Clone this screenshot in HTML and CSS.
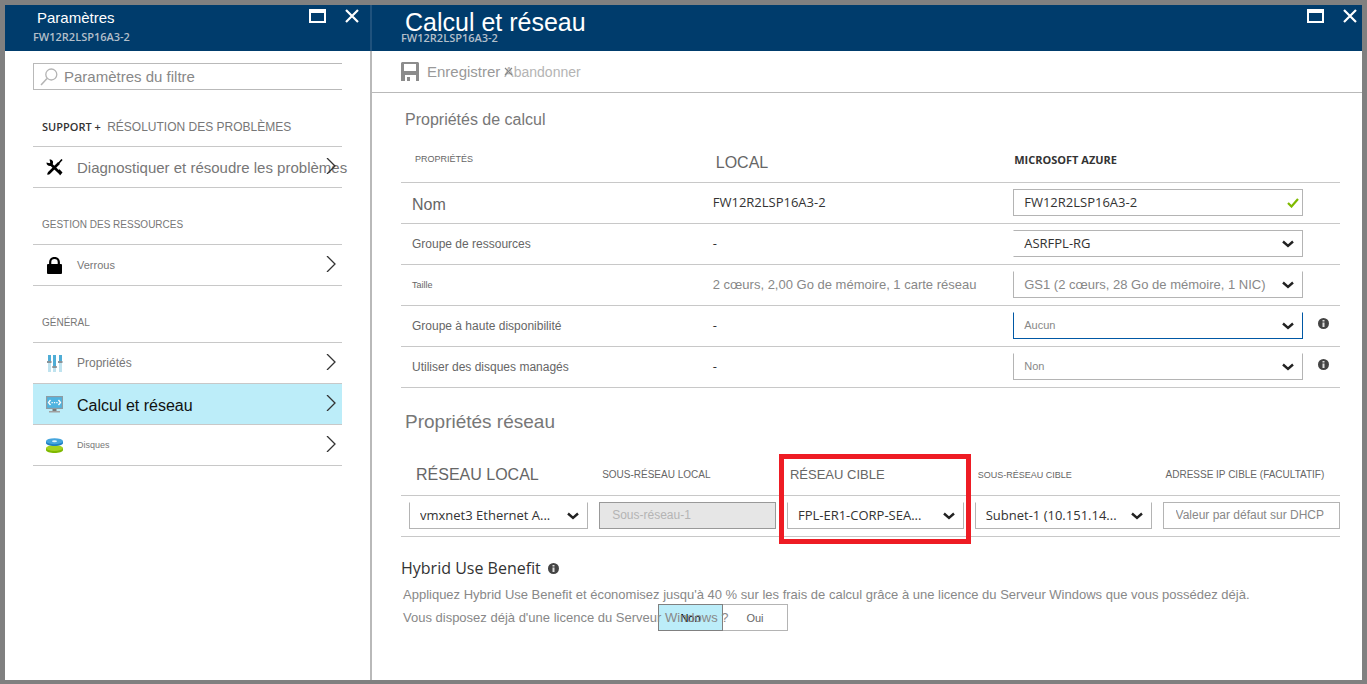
FILE: index.html
```html
<!DOCTYPE html>
<html lang="fr">
<head>
<meta charset="utf-8">
<title>Calcul et réseau</title>
<link rel="stylesheet" href="styles.css">
</head>
<body>
<svg class="sprite" aria-hidden="true">
  <symbol id="maximize" viewBox="0 0 17 14"><path fill="currentColor" fill-rule="evenodd" d="M0 0h17v14H0zM2 4v8h13V4z"/></symbol>
  <symbol id="close" viewBox="0 0 14 14"><path d="M1 1l12 12M13 1L1 13" fill="none" stroke="currentColor" stroke-width="2.2"/></symbol>
  <symbol id="chevron" viewBox="0 0 10 16"><path d="M1 0l8 8-8 8" fill="none" stroke="currentColor" stroke-width="1.3"/></symbol>
  <symbol id="down" viewBox="0 0 12 8"><path d="M1 1.5l5 4.500 5-4.500" fill="none" stroke="currentColor" stroke-width="2.4"/></symbol>
  <symbol id="info" viewBox="0 0 11 11"><circle cx="5.5" cy="5.5" r="5.5" fill="#444"/><path d="M4.500 2h2v1.500h-2zM4.500 4.500h2V9h-2z" fill="#ddd"/></symbol>
</svg>
<div class="portal">
  <nav class="blade menu">
    <header class="bar">
      <div class="titles">
        <h1 class="title">Paramètres</h1>
        <p class="machine">FW12R2LSP16A3-2</p>
      </div>
      <button class="bar-button" aria-label="Agrandir"><svg width="17" height="14"><use href="#maximize"/></svg></button>
      <button class="bar-button" aria-label="Fermer"><svg width="14" height="14"><use href="#close"/></svg></button>
    </header>
    <div class="menu-body">
      <label class="search">
        <svg width="18" height="18" viewBox="0 0 18 18" fill="none" stroke="#b4b4b4"><circle cx="11.3" cy="6.5" r="5.5" stroke-width="1.3"/><path d="M7 10.5L1 17" stroke-width="1.5"/></svg>
        <input class="search-input size-15" type="text" placeholder="Paramètres du filtre">
      </label>
      <h2 class="group size-12"><strong class="group-strong">SUPPORT +</strong> RÉSOLUTION DES PROBLÈMES</h2>
      <a class="item size-15" href="#">
        <svg class="item-icon" viewBox="0 0 17 17"><path d="M2.5 14.5L13 4M4 4.500l10.500 10" stroke="#000" stroke-width="2.6" fill="none"/><path d="M12 5l4-4.500M1.500 15.500l3-3" stroke="#000" stroke-width="1.600" fill="none"/><path d="M.5 3.500l3 .8.8-.8L3.500.5C6.500.2 8 3 6.500 5.500L5 7C2.500 7.500.3 6 .5 3.500zM12 11.500l1.500-1.300 3 3.300-2.500 3z" fill="#000"/></svg>
        <span class="item-text">Diagnostiquer et résoudre les problèmes</span>
        <svg class="item-arrow"><use href="#chevron"/></svg>
      </a>
      <h2 class="group size-10">GESTION DES RESSOURCES</h2>
      <a class="item size-11" href="#">
        <svg class="item-icon" viewBox="0 0 17 17"><rect x="1" y="7" width="15" height="10" rx="1" fill="#000"/><path d="M4.200 8V5a4.300 4 0 0 1 8.600 0v3" fill="none" stroke="#000" stroke-width="2.200"/></svg>
        <span class="item-text">Verrous</span>
        <svg class="item-arrow"><use href="#chevron"/></svg>
      </a>
      <h2 class="group size-10">GÉNÉRAL</h2>
      <a class="item size-12" href="#">
        <svg class="item-icon" viewBox="0 0 17 17"><path d="M2 8h3v9H2zM7 13h3v4H7zM13 8h3v9h-3z" fill="#bfe3ef"/><path d="M2 0h3v6H2zM7 0h3v11H7zM13 0h3v6h-3z" fill="#4fadd6"/><path d="M1 6h4.500v2H1zM6.300 11h4.500v2H6.300zM12 6h4.500v2H12z" fill="#8a9499"/></svg>
        <span class="item-text">Propriétés</span>
        <svg class="item-arrow"><use href="#chevron"/></svg>
      </a>
      <a class="item item-current size-16" href="#" aria-current="page">
        <svg class="item-icon" viewBox="0 0 17 17"><path d="M0 0h17v13H0z" fill="#8f9ca3"/><path d="M1.200 1.200h14.600v10.600H1.200z" fill="#4fb4e0"/><path d="M6.500 13h4v2.500h-4z" fill="#7a7a7a"/><path d="M3 15h11v1.500H3z" fill="#a0a0a0"/><path d="M4.500 4L2.500 6.500l2 2.500M12.500 4l2 2.500-2 2.500" fill="none" stroke="#fff" stroke-width="1.300"/><path d="M5.500 6h1.300v1.200H5.500zM7.900 6h1.300v1.200H7.900zM10.300 6h1.300v1.200h-1.300z" fill="#fff"/></svg>
        <span class="item-text">Calcul et réseau</span>
        <svg class="item-arrow"><use href="#chevron"/></svg>
      </a>
      <a class="item size-9" href="#">
        <svg class="item-icon" viewBox="0 0 17 17"><path d="M0 11v2c0 4 17 4 17 0v-2z" fill="#7fb900"/><ellipse cx="8.500" cy="11" rx="8.500" ry="3" fill="#a5d11f"/><path d="M0 4v2c0 4 17 4 17 0V4z" fill="#1f7fc4"/><ellipse cx="8.500" cy="4.200" rx="8.500" ry="3" fill="#45a5dd"/><ellipse cx="8.500" cy="4.200" rx="2.500" ry="1" fill="#d8f0fa"/></svg>
        <span class="item-text">Disques</span>
        <svg class="item-arrow"><use href="#chevron"/></svg>
      </a>
    </div>
  </nav>
  <main class="blade detail">
    <header class="bar">
      <div class="titles">
        <h1 class="title title-large">Calcul et réseau</h1>
        <p class="machine">FW12R2LSP16A3-2</p>
      </div>
      <button class="bar-button" aria-label="Agrandir"><svg width="17" height="14"><use href="#maximize"/></svg></button>
      <button class="bar-button" aria-label="Fermer"><svg width="14" height="14"><use href="#close"/></svg></button>
    </header>
    <div class="toolbar">
      <button class="tool size-15">
        <svg width="18" height="19" viewBox="0 0 18 19"><path d="M1 0h16l1 1v18h-3v-6H4v6H0V1zM3 2v7h12V2zM6 15h3v4H6z" fill="#8c8c8c" fill-rule="evenodd"/></svg>
        Enregistrer
      </button>
      <button class="tool tool-discard size-14">
        <svg class="discard-icon" viewBox="0 0 9 9"><path d="M1 1l7 7M8 1L1 8" stroke="#888" stroke-width="1.200"/></svg>
        Abandonner
      </button>
    </div>
    <div class="detail-body">
      <h2 class="section size-16">Propriétés de calcul</h2>
      <table class="grid compute">
        <colgroup><col class="compute-name"><col class="compute-local"><col></colgroup>
        <thead>
          <tr><th class="size-9 indent">PROPRIÉTÉS</th><th class="size-16">LOCAL</th><th class="azure">MICROSOFT AZURE</th></tr>
        </thead>
        <tbody>
          <tr>
            <th class="size-16"><label for="name">Nom</label></th><td class="ui">FW12R2LSP16A3-2</td>
            <td><div class="field"><div class="control"><input id="name" class="box ui" type="text" value="FW12R2LSP16A3-2"><svg class="tick" viewBox="0 0 12 10"><path d="M1 5l3.500 3.500L11 1" fill="none" stroke="#7fba00" stroke-width="2.200"/></svg></div></div></td>
          </tr>
          <tr>
            <th class="size-12"><label for="group">Groupe de ressources</label></th><td class="ui">-</td>
            <td><div class="field"><div class="control"><select id="group" class="box ui open-left"><option>ASRFPL-RG</option></select><svg class="arrow"><use href="#down"/></svg></div></div></td>
          </tr>
          <tr>
            <th class="size-9"><label for="size">Taille</label></th><td class="size-13 muted">2 cœurs, 2,00 Go de mémoire, 1 carte réseau</td>
            <td><div class="field"><div class="control"><select id="size" class="box open-top size-13"><option>GS1 (2 cœurs, 28 Go de mémoire, 1 NIC)</option></select><svg class="arrow"><use href="#down"/></svg></div></div></td>
          </tr>
          <tr>
            <th class="size-12"><label for="availability">Groupe à haute disponibilité</label></th><td class="ui">-</td>
            <td><div class="field"><div class="control"><select id="availability" class="box box-focus open-top size-11"><option>Aucun</option></select><svg class="arrow"><use href="#down"/></svg></div><svg class="info field-info"><use href="#info"/></svg></div></td>
          </tr>
          <tr>
            <th class="size-12"><label for="managed">Utiliser des disques managés</label></th><td class="ui">-</td>
            <td><div class="field"><div class="control"><select id="managed" class="box open-top size-11"><option>Non</option></select><svg class="arrow"><use href="#down"/></svg></div><svg class="info field-info"><use href="#info"/></svg></div></td>
          </tr>
        </tbody>
      </table>

      <h2 class="section section-network size-19">Propriétés réseau</h2>
      <table class="grid network">
        <colgroup><col class="network-first"><col class="network-next"><col class="network-next"><col class="network-next"><col></colgroup>
        <thead>
          <tr>
            <th class="size-16" id="local-net">RÉSEAU LOCAL</th>
            <th class="size-10" id="local-sub">SOUS-RÉSEAU LOCAL</th>
            <th class="size-13 marked" id="target-net">RÉSEAU CIBLE<span class="marker"></span></th>
            <th class="size-9" id="target-sub">SOUS-RÉSEAU CIBLE</th>
            <th class="size-10" id="target-ip">ADRESSE IP CIBLE (FACULTATIF)</th>
          </tr>
        </thead>
        <tbody>
          <tr>
            <td><div class="control"><select class="box ui open-top" aria-labelledby="local-net"><option>vmxnet3 Ethernet A...</option></select><svg class="arrow"><use href="#down"/></svg></div></td>
            <td><input class="box box-disabled size-12" type="text" value="Sous-réseau-1" disabled aria-labelledby="local-sub"></td>
            <td><div class="control"><select class="box ui open-top" aria-labelledby="target-net"><option>FPL-ER1-CORP-SEA...</option></select><svg class="arrow"><use href="#down"/></svg></div></td>
            <td><div class="control"><select class="box ui open-top" aria-labelledby="target-sub"><option>Subnet-1 (10.151.14...</option></select><svg class="arrow"><use href="#down"/></svg></div></td>
            <td><input class="box size-12" type="text" placeholder="Valeur par défaut sur DHCP" aria-labelledby="target-ip"></td>
          </tr>
        </tbody>
      </table>

      <h2 class="benefit">Hybrid Use Benefit <svg class="info"><use href="#info"/></svg></h2>
      <p class="note size-13">Appliquez Hybrid Use Benefit et économisez jusqu'à 40 % sur les frais de calcul grâce à une licence du Serveur Windows que vous possédez déjà.</p>
      <div class="question">
        <p class="note question-text size-13">Vous disposez déjà d'une licence du Serveur Windows ?</p>
        <div class="toggle">
          <button class="choice choice-on size-11" aria-pressed="true">Non</button>
          <button class="choice size-11" aria-pressed="false">Oui</button>
        </div>
      </div>
    </div>
  </main>
</div>
</body>
</html>
```
FILE: styles.css
```css
* { box-sizing: border-box; }
body {
  margin: 0;
  background: #808080;
  color: #666;
  font-family: "Liberation Sans", Arial, sans-serif;
}
h1, h2, p { margin: 0; font-weight: 400; }
button, input, select { font-family: inherit; color: inherit; }
button { border: 0; background: none; padding: 0; }
svg { display: block; flex: none; }
.sprite { position: absolute; width: 0; height: 0; }

.size-9 { font-size: 9px; }
.size-10 { font-size: 10px; }
.size-11 { font-size: 11px; }
.size-12 { font-size: 12px; }
.size-13 { font-size: 13px; }
.size-14 { font-size: 14px; }
.size-15 { font-size: 15px; }
.size-16 { font-size: 16px; }
.size-19 { font-size: 19px; }
.ui { font-family: "Open Sans", sans-serif; font-size: 13px; color: #333; }

.portal {
  display: flex;
  min-height: 100vh;
  border: 5px solid #808080;
  border-bottom-width: 4px;
}
.blade { min-width: 0; background: #fff; }
.menu { flex: 0 0 367px; border-right: 2px solid #b9b9b9; }
.detail { flex: 1; }

.bar {
  display: flex;
  align-items: flex-start;
  height: 46px;
  padding: 4px 5px 0 29px;
  background: #003c6c;
  color: #fff;
}
.menu .bar {
  padding-left: 28px;
  padding-right: 11px;
  margin-right: -2px;
  border-right: 2px solid #1f527d;
}
.titles { flex: 1; }
.title { padding-left: 4px; font-size: 15px; line-height: 18px; }
.title-large { padding-top: 8px; font-size: 25px; line-height: 11px; }
.machine {
  font: 600 11px/20px "Open Sans", sans-serif;
  color: #b3bfca;
}
.bar-button { color: #fff; margin-left: 19px; }

.menu-body { padding: 12px 28px 0; }
.search {
  display: flex;
  align-items: center;
  height: 27px;
  padding-left: 6px;
  gap: 6px;
  border: 1px solid #b9b9b9;
  border-right: 0;
}
.search-input { flex: 1; min-width: 0; border: 0; padding: 0; background: none; outline: 0; }
.search-input::placeholder { color: #888; }
.group {
  padding: 27px 9px 9px;
  line-height: 20px;
  border-bottom: 1px solid #c8c8c8;
  color: #777;
}
.group-strong { margin-right: 3px; font: 600 11px/20px "Open Sans", sans-serif; color: #333; }
.item {
  position: relative;
  display: flex;
  align-items: center;
  gap: 14px;
  height: 41px;
  padding-left: 13px;
  border-bottom: 1px solid #c8c8c8;
  color: #777;
  text-decoration: none;
  white-space: nowrap;
}
.item-icon { width: 17px; height: 17px; }
.item-arrow {
  position: absolute;
  right: 6px;
  top: 11px;
  width: 10px;
  height: 16px;
  color: #333;
}
.item-current { background: #bcedf9; color: #111; }
.item-current .item-text { padding-top: 4px; }

.toolbar {
  display: flex;
  align-items: center;
  gap: 4px;
  height: 42px;
  padding-left: 29px;
  border-bottom: 1px solid #b9b9b9;
}
.tool { position: relative; display: flex; align-items: center; gap: 8px; color: #999; }
.tool-discard { color: #b4b4b4; }
.discard-icon { position: absolute; left: 0; top: 3px; width: 9px; height: 9px; }

.detail-body { padding: 15px 22px 0 29px; }
.section { padding-left: 4px; line-height: 24px; color: #777; }
.section-network { margin-top: 22px; }
.grid {
  width: 100%;
  table-layout: fixed;
  border-collapse: separate;
  border-spacing: 0;
}
.grid th { font-weight: 400; text-align: left; }
.grid th, .grid td { padding: 0; border-bottom: 1px solid #c8c8c8; }
.grid tbody tr { height: 41px; }
.grid tbody td { padding-bottom: 2px; }
.compute thead th { height: 51px; padding: 12px 0 0 3px; }
.compute thead th.indent { padding: 4px 0 0 14px; }
.compute thead .azure { padding: 4px 0 0 1px; font: 700 11px "Open Sans", sans-serif; color: #333; }
.compute tbody th { padding-left: 11px; }
.compute tbody th.size-16 { padding-top: 4px; }
.compute-name { width: 33.2%; }
.compute-local { width: 32%; }
.muted { color: #888; }
.field { display: flex; align-items: center; gap: 15px; padding-right: 12px; }
.field .control { flex: 0 0 290px; }
.field-info { align-self: flex-start; margin-top: 6px; }
.control { position: relative; }
.box {
  display: block;
  width: 100%;
  height: 27px;
  margin: 0;
  padding: 0 10px;
  border: 1px solid #b4b4b4;
  border-radius: 0;
  background: #fff;
  appearance: none;
  outline: 0;
  color: #888;
}
.box.ui { color: #333; }
.box::placeholder { color: #888; }
input.box.size-12 { padding: 0 12px; }
.box-focus { border-color: #0058a5; }
.open-left { border-left-color: transparent; }
.open-top { border-top-color: transparent; }
.box-disabled { background: #e6e6e6; border-color: #999; color: #b4b4b4; }
.arrow { position: absolute; right: 9px; top: 10px; width: 12px; height: 8px; color: #222; pointer-events: none; }
.tick { position: absolute; right: 4px; top: 9px; width: 12px; height: 10px; }
.info { width: 11px; height: 11px; }

.network-first { width: 21.1%; }
.network-next { width: 20%; }
.network thead th { height: 62px; padding: 20px 0 0 3px; }
.network thead th:first-child { padding-left: 15px; }
.network td { padding-right: 11px; }
.network td:first-child { padding-left: 8px; }
.network td:last-child { padding-right: 0; }
.marked { position: relative; }
.marker {
  position: absolute;
  left: -8px;
  right: 4px;
  top: 20px;
  bottom: -49px;
  border: 5px solid #ee1c24;
  pointer-events: none;
}

.benefit {
  display: flex;
  align-items: center;
  gap: 7px;
  margin-top: 19px;
  font: 400 16px/24px "Open Sans", sans-serif;
  color: #333;
}
.note { padding: 3px 0 0 2px; line-height: 24px; color: #888; }
.question { position: relative; }
.question-text { position: relative; z-index: 1; padding-top: 0; line-height: 22px; pointer-events: none; }
.toggle { position: absolute; left: 257px; top: -3px; display: flex; }
.choice { width: 65px; height: 27px; border: 1px solid #b4b4b4; border-left: 0; background: #fff; }
.choice-on { border: 1px solid #808080; background: #bcedf9; color: #000; }
```
